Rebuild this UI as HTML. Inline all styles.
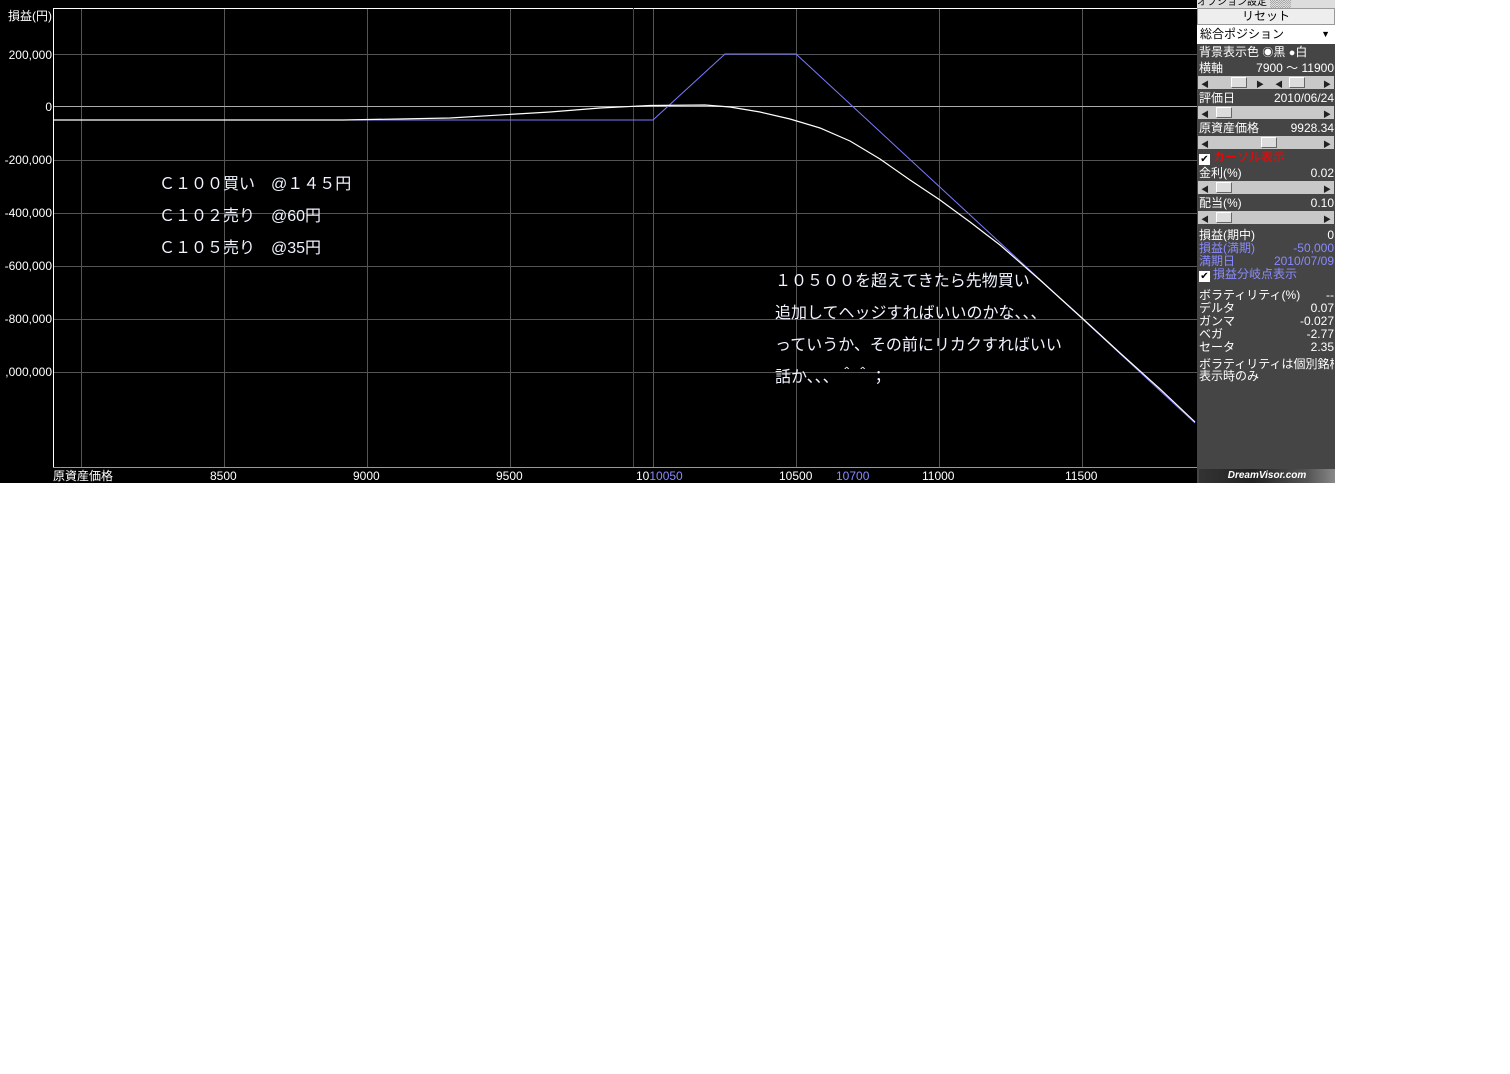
<!DOCTYPE html>
<html><head><meta charset="utf-8">
<style>
*{margin:0;padding:0;box-sizing:border-box}
body{width:1510px;height:1074px;background:#fff;position:relative;overflow:hidden;font-family:"Liberation Sans","Noto Sans CJK JP",sans-serif}
#app{position:absolute;left:0;top:0;width:1335px;height:483px;background:#000}
#panel{position:absolute;left:1197px;top:0;width:138px;height:483px;background:#454545;color:#fff;font-size:12px;line-height:13px}
.r{position:absolute;left:2px;right:1px;height:14px;white-space:nowrap}
.r b{font-weight:normal;position:absolute;right:0;top:0}
.sl{position:absolute;left:1px;right:1px;height:13px;background:#c8c8c8}
.sl .a{position:absolute;top:2px;font-size:8px;color:#222}
.th{position:absolute;top:1px;width:16px;height:11px;background:#ddd;border:1px solid #fff;border-right-color:#666;border-bottom-color:#666}
.cb{display:inline-block;width:11px;height:11px;background:#fff;color:#000;font-size:10px;line-height:11px;text-align:center;vertical-align:-1px;margin-right:3px}
.blue{color:#8a8aff}
</style></head><body>
<div id="app">
<svg width="1197" height="483" style="position:absolute;left:0;top:0" font-family="Liberation Sans, Noto Sans CJK JP, sans-serif">
<g stroke="#555" stroke-width="1">
<line x1="81.5" y1="8" x2="81.5" y2="467"/><line x1="224.5" y1="8" x2="224.5" y2="467"/><line x1="367.5" y1="8" x2="367.5" y2="467"/><line x1="510.5" y1="8" x2="510.5" y2="467"/><line x1="653.5" y1="8" x2="653.5" y2="467"/><line x1="796.5" y1="8" x2="796.5" y2="467"/><line x1="939.5" y1="8" x2="939.5" y2="467"/><line x1="1082.5" y1="8" x2="1082.5" y2="467"/>
<line x1="53" y1="54.5" x2="1197" y2="54.5"/><line x1="53" y1="160.5" x2="1197" y2="160.5"/><line x1="53" y1="213.5" x2="1197" y2="213.5"/><line x1="53" y1="266.5" x2="1197" y2="266.5"/><line x1="53" y1="319.5" x2="1197" y2="319.5"/><line x1="53" y1="372.5" x2="1197" y2="372.5"/>
</g>
<line x1="53" y1="106.5" x2="1197" y2="106.5" stroke="#aaa"/>
<line x1="53" y1="467.5" x2="1197" y2="467.5" stroke="#999"/>
<line x1="53.5" y1="8" x2="53.5" y2="467" stroke="#fff"/>
<line x1="53" y1="8.5" x2="1197" y2="8.5" stroke="#fff"/>
<line x1="633.5" y1="8" x2="633.5" y2="467" stroke="#e00"/>
<polyline fill="none" stroke="#7a7aff" stroke-width="1" points="343,120 653,120 725,54 796,54 1195,423"/>
<polyline fill="none" stroke="#fff" stroke-width="1.2" points="53,120 343,120 450,118 550,112 600,108 650,105.5 705,105 730,107 760,112 790,119 820,128 850,141 880,159 910,180 940,200 970,222 1000,245 1040,280 1082,318 1120,353 1160,389 1195,422"/>
<g fill="#fff" font-size="12" text-anchor="end">
<text x="52" y="20">損益(円)</text><text x="52" y="59">200,000</text><text x="52" y="111">0</text><text x="52" y="164">-200,000</text><text x="52" y="217">-400,000</text><text x="52" y="270">-600,000</text><text x="52" y="323">-800,000</text><text x="52" y="376">,000,000</text>
</g>
<g fill="#fff" font-size="12">
<text x="53" y="480">原資産価格</text><text x="210" y="480">8500</text><text x="353" y="480">9000</text><text x="496" y="480">9500</text><text x="636" y="480">10<tspan fill="#8a8aff">10050</tspan></text><text x="779" y="480">10500</text><text x="836" y="480" fill="#8a8aff">10700</text><text x="922" y="480">11000</text><text x="1065" y="480">11500</text>
</g>
<g fill="#f0f4ff" font-size="16">
<text x="159" y="189">Ｃ１００買い　@１４５円</text>
<text x="159" y="221">Ｃ１０２売り　@60円</text>
<text x="159" y="253">Ｃ１０５売り　@35円</text>
<text x="775" y="286">１０５００を超えてきたら先物買い</text>
<text x="775" y="318">追加してヘッジすればいいのかな、、、</text>
<text x="775" y="350">っていうか、その前にリカクすればいい</text>
<text x="775" y="382">話か、、、＾＾；</text>
</g>
</svg>
<div id="panel">
<div style="position:absolute;left:0;top:0;width:138px;height:8px;background:#ddd;overflow:hidden;font-size:10px;line-height:6px;color:#000">オプション設定 ░░░</div>
<div style="position:absolute;left:0;top:8px;width:138px;height:17px;background:#eee;border:1px solid #999;color:#000;text-align:center;line-height:15px">リセット</div>
<div style="position:absolute;left:0;top:25px;width:138px;height:19px;background:#fff;color:#000;line-height:19px;padding-left:3px">総合ポジション<span style="position:absolute;right:5px;font-size:9px">▼</span></div>
<div class="r" style="top:46px">背景表示色 <span style="font-size:11px">◉</span>黒 <span style="font-size:11px">●</span>白</div>
<div class="r" style="top:62px">横軸<b>7900 ～ 11900</b></div>
<div class="sl" style="top:76px"><span class="a" style="left:3px">◀</span><div class="th" style="left:33px"></div><span class="a" style="left:58px">▶</span><span class="a" style="left:77px">◀</span><div class="th" style="left:91px"></div><span class="a" style="right:3px">▶</span></div>
<div class="r" style="top:92px">評価日<b>2010/06/24</b></div>
<div class="sl" style="top:106px"><span class="a" style="left:3px">◀</span><div class="th" style="left:18px"></div><span class="a" style="right:3px">▶</span></div>
<div class="r" style="top:122px">原資産価格<b>9928.34</b></div>
<div class="sl" style="top:136px"><span class="a" style="left:3px">◀</span><div class="th" style="left:63px"></div><span class="a" style="right:3px">▶</span></div>
<div class="r" style="top:151px;color:#f00"><span class="cb">✔</span>カーソル表示</div>
<div class="r" style="top:167px">金利(%)<b>0.02</b></div>
<div class="sl" style="top:181px"><span class="a" style="left:3px">◀</span><div class="th" style="left:18px"></div><span class="a" style="right:3px">▶</span></div>
<div class="r" style="top:197px">配当(%)<b>0.10</b></div>
<div class="sl" style="top:211px"><span class="a" style="left:3px">◀</span><div class="th" style="left:18px"></div><span class="a" style="right:3px">▶</span></div>
<div class="r" style="top:229px">損益(期中)<b>0</b></div>
<div class="r blue" style="top:242px">損益(満期)<b>-50,000</b></div>
<div class="r blue" style="top:255px">満期日<b>2010/07/09</b></div>
<div class="r blue" style="top:268px"><span class="cb">✔</span>損益分岐点表示</div>
<div class="r" style="top:289px">ボラティリティ(%)<b>--</b></div>
<div class="r" style="top:302px">デルタ<b>0.07</b></div>
<div class="r" style="top:315px">ガンマ<b>-0.027</b></div>
<div class="r" style="top:328px">ベガ<b>-2.77</b></div>
<div class="r" style="top:341px">セータ<b>2.35</b></div>
<div class="r" style="top:358px;overflow:hidden">ボラティリティは個別銘柄</div>
<div class="r" style="top:370px">表示時のみ</div>
<div style="position:absolute;left:2px;top:469px;width:136px;height:14px;background:linear-gradient(90deg,#333,#222 40%,#555 80%,#888);color:#fff;font-size:10px;font-style:italic;font-weight:bold;text-align:center;line-height:14px">DreamVisor.com</div>
</div>
</div>
</body></html>
